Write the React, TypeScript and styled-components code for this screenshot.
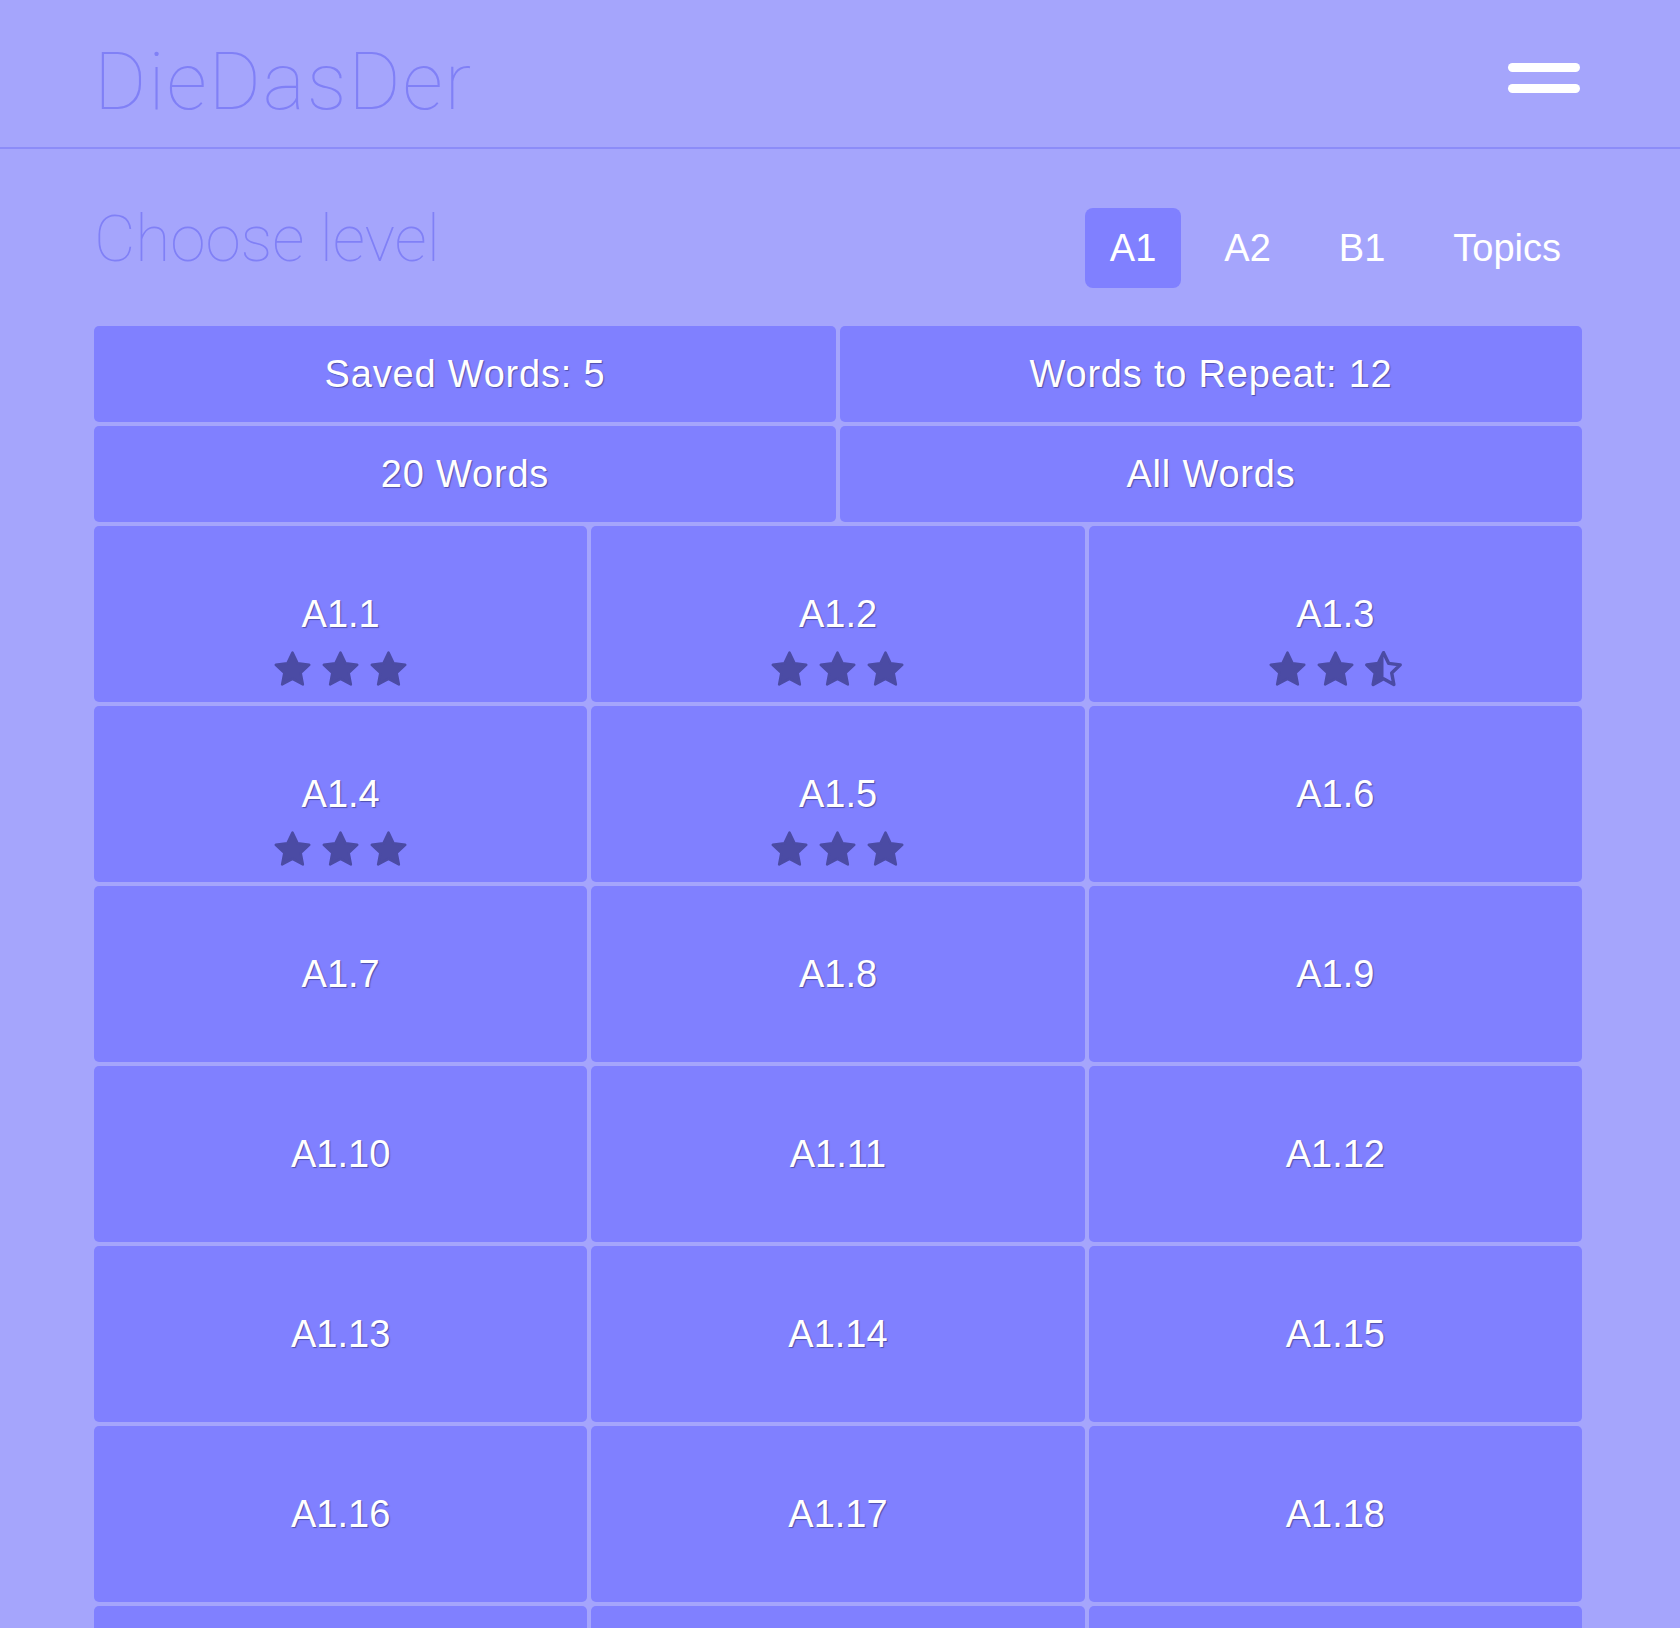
import { useId } from 'react';
import styled, { createGlobalStyle } from 'styled-components';

const GlobalStyle = createGlobalStyle`
  html, body {
    margin: 0;
    padding: 0;
    height: 100%;
    overflow: hidden;
    background: #a5a5fc;
  }

  #root {
    height: 100%;
  }
`;

const LEVELS = ['A1', 'A2', 'B1', 'Topics'];

const UNITS: { name: string; stars?: number }[] = Array.from({ length: 21 }, (_, i) => ({
  name: `A1.${i + 1}`,
}));
UNITS[0].stars = 3;
UNITS[1].stars = 3;
UNITS[2].stars = 2.5;
UNITS[3].stars = 3;
UNITS[4].stars = 3;

const STAR_PATH =
  'M12 2.6l2.85 5.95 6.5.85-4.78 4.5 1.22 6.45L12 17.2l-5.79 3.15 1.22-6.45-4.78-4.5 6.5-.85z';

function Star({ fill }: { fill: 'full' | 'half' }) {
  const clip = useId();
  if (fill === 'full') {
    return (
      <StarSvg viewBox='0 0 24 24'>
        <path d={STAR_PATH} fill='currentColor' stroke='currentColor' strokeWidth={1.4} strokeLinejoin='round' />
      </StarSvg>
    );
  }
  return (
    <StarSvg viewBox='0 0 24 24'>
      <defs>
        <clipPath id={clip}>
          <rect x='0' y='0' width='12' height='24' />
        </clipPath>
      </defs>
      <path d={STAR_PATH} fill='currentColor' clipPath={`url(#${clip})`} />
      <path d={STAR_PATH} fill='none' stroke='currentColor' strokeWidth={1.9} strokeLinejoin='round' />
    </StarSvg>
  );
}

function Rating({ value }: { value: number }) {
  const stars: ('full' | 'half')[] = [];
  for (let i = 1; i <= Math.ceil(value); i++) stars.push(i <= value ? 'full' : 'half');
  return (
    <Stars>
      {stars.map((s, i) => (
        <Star key={i} fill={s} />
      ))}
    </Stars>
  );
}

export default function App() {
  return (
    <Page>
      <GlobalStyle />
      <Header>
        <Logo>DieDasDer</Logo>
        <Burger aria-label='menu'>
          <span />
          <span />
        </Burger>
      </Header>
      <Main>
        <LevelBar>
          <Title>Choose level</Title>
          <Tabs>
            {LEVELS.map((l) => (
              <Tab key={l} $active={l === 'A1'}>
                {l}
              </Tab>
            ))}
          </Tabs>
        </LevelBar>
        <Board>
          <WideGrid>
            <WideCell>Saved Words: 5</WideCell>
            <WideCell>Words to Repeat: 12</WideCell>
            <WideCell>20 Words</WideCell>
            <WideCell>All Words</WideCell>
          </WideGrid>
          <UnitGrid>
            {UNITS.map((u) => (
              <UnitCell key={u.name}>
                <UnitName>{u.name}</UnitName>
                {u.stars && <Rating value={u.stars} />}
              </UnitCell>
            ))}
          </UnitGrid>
        </Board>
      </Main>
    </Page>
  );
}

const Page = styled.div`
  height: 100%;
  overflow: hidden;
  background: #a5a5fc;
  font-family: 'Liberation Sans', Arial, sans-serif;
  color: #fff;
`;

const Header = styled.header`
  display: flex;
  align-items: center;
  justify-content: space-between;
  box-sizing: border-box;
  height: 149px;
  padding: 16px 100px 0 94px;
  border-bottom: 2px solid #8c8cf8;
`;

const Logo = styled.div`
  font-family: Roboto, 'Noto Sans', sans-serif;
  font-weight: 100;
  font-size: 80px;
  line-height: 1;
  color: #8080f6;
  letter-spacing: 1.8px;
`;

const Burger = styled.button`
  display: flex;
  flex-direction: column;
  gap: 12px;
  width: 72px;
  padding: 0;
  margin-top: -7px;
  border: none;
  background: none;

  span {
    display: block;
    height: 9px;
    border-radius: 5px;
    background: #fff;
  }
`;

const Main = styled.main`
  padding: 59px 98px 0 94px;
`;

const LevelBar = styled.div`
  display: flex;
  align-items: flex-start;
  justify-content: space-between;
  height: 80px;
  margin-bottom: 38px;
`;

const Title = styled.h1`
  margin: 0;
  font-family: Roboto, 'Noto Sans', sans-serif;
  font-weight: 100;
  font-size: 64px;
  line-height: 64px;
  letter-spacing: -0.1px;
  color: #8080f6;
`;

const Tabs = styled.nav`
  display: flex;
  gap: 18px;
  margin-right: -4px;
`;

const Tab = styled.a<{ $active?: boolean }>`
  display: block;
  height: 80px;
  padding: 0 25px;
  border-radius: 8px;
  font-size: 38px;
  line-height: 80px;
  color: #fff;
  background: ${({ $active }) => ($active ? '#8080ff' : 'transparent')};
`;

const Board = styled.section`
  display: flex;
  flex-direction: column;
  gap: 4px;
`;

const WideGrid = styled.div`
  display: grid;
  grid-template-columns: 1fr 1fr;
  gap: 4px;
`;

const cellText = `
  color: #fff;
  font-size: 38px;
  text-shadow: 1px 1px 1px rgba(30, 30, 90, 0.5);
`;

const WideCell = styled.div`
  display: flex;
  align-items: center;
  justify-content: center;
  height: 96px;
  border-radius: 5px;
  background: #8080ff;
  letter-spacing: 0.8px;
  ${cellText}
`;

const UnitGrid = styled.div`
  display: grid;
  grid-template-columns: repeat(3, 1fr);
  grid-auto-rows: 176px;
  gap: 4px;
`;

const UnitCell = styled.div`
  display: flex;
  flex-direction: column;
  align-items: center;
  box-sizing: border-box;
  padding-top: 66px;
  border-radius: 5px;
  background: #8080ff;
`;

const UnitName = styled.div`
  line-height: 44px;
  ${cellText}
`;

const Stars = styled.div`
  display: flex;
  gap: 5px;
  margin-top: 12px;
  color: #4b4ba4;
`;

const StarSvg = styled.svg`
  display: block;
  width: 43px;
  height: 43px;
`;
